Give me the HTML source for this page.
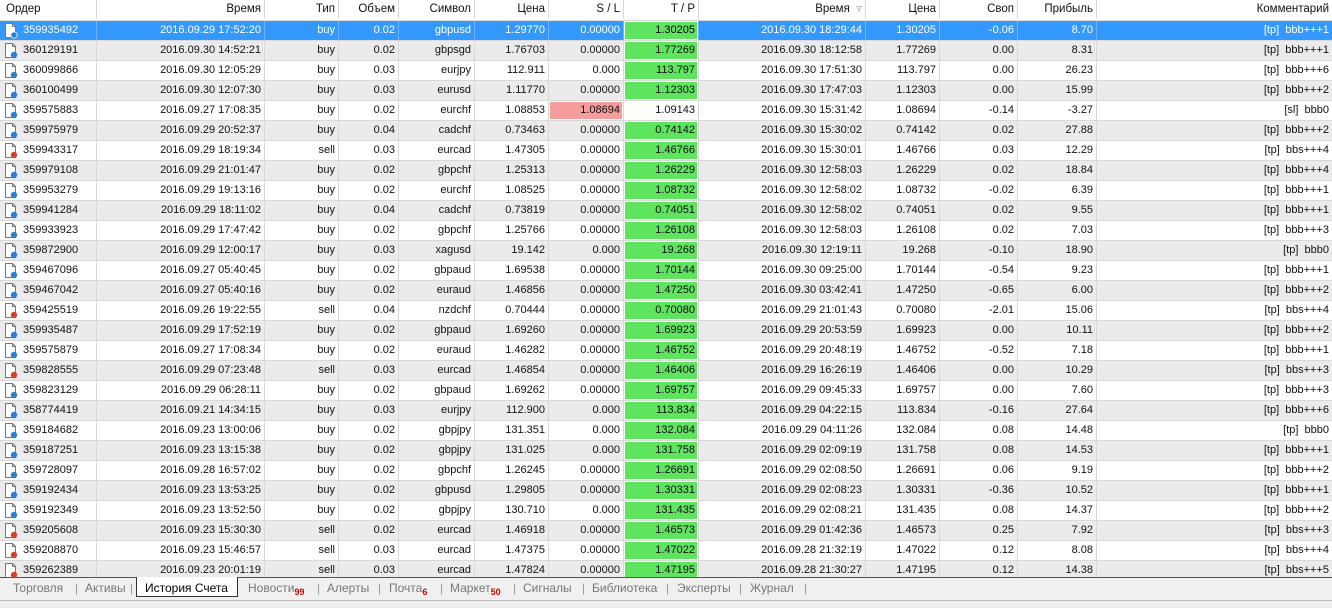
<!DOCTYPE html>
<html><head><meta charset="utf-8"><style>
*{margin:0;padding:0;box-sizing:border-box}
body{width:1332px;height:608px;overflow:hidden;background:#fff;font-family:"Liberation Sans",sans-serif;font-size:11px;color:#111;position:relative}
.r{position:absolute;left:0;width:1332px;height:20px;display:flex;border-bottom:1px solid #d9d9d9}
.r>div{height:19px;line-height:19px;text-align:right;padding-right:3px;border-right:1px solid #d9d9d9;white-space:nowrap;overflow:hidden;position:relative}
.r>div:nth-child(1){width:97px;text-align:left;padding-left:23px}
.r>div:nth-child(2){width:168px}.r>div:nth-child(3){width:74px}.r>div:nth-child(4){width:60px}
.r>div:nth-child(5){width:76px}.r>div:nth-child(6){width:74px}.r>div:nth-child(7){width:75px}
.r>div:nth-child(8){width:75px}.r>div:nth-child(9){width:167px}.r>div:nth-child(10){width:74px}
.r>div:nth-child(11){width:78px}.r>div:nth-child(12){width:79px}.r>div:nth-child(13){width:235px;border-right:none}
.h{top:0;background:#fff;height:21px;font-size:11.5px}
.h>div:nth-child(1){padding-left:6px}
.g{background:#ebebeb}
.s{background:#3399ff;color:#fff}
.s>div{border-right-color:#6fb3ff}
.t{background:#5fe45f;box-shadow:inset 0 0 0 1px #fff}
.s .t{color:#000}
.l{background:#f59d9d;box-shadow:inset 0 0 0 1px #fff}
.i{position:absolute;left:4px;top:2px}
.tabs{position:absolute;left:0;top:577px;width:1332px;height:24px;background:#f0f0f0;border-top:1px solid #555;border-bottom:1px solid #bbb;color:#777;font-size:12px}
.tabs span{position:absolute;top:3px}
.tabs .sep{color:#999}
.tabs sub{color:#d00;font-size:9px;font-weight:bold;vertical-align:-3px}
.act{position:absolute;left:136px;top:-1px;width:102px;height:20px;background:#fff;border:1px solid #333;border-top:none}
.bot{position:absolute;left:0;top:601px;width:1332px;height:7px;background:#f0f0f0}
</style></head><body>
<svg width="0" height="0" style="position:absolute"><defs>
<g id="doc"><path d="M1.5 .5h7l3 3v11h-10z" fill="#fff" stroke="#777"/><path d="M8.5 .5v3h3" fill="none" stroke="#777"/></g>
</defs></svg>
<div class="r h"><div>Ордер</div><div>Время</div><div>Тип</div><div>Объем</div><div>Символ</div><div>Цена</div><div>S / L</div><div>T / P</div><div>Время &nbsp;<span style="color:#999">▿</span></div><div>Цена</div><div>Своп</div><div>Прибыль</div><div>Комментарий</div></div>

<div class="r s" style="top:21px"><div><svg class="i" width="14" height="16"><use href="#doc"/><circle cx="10" cy="12" r="3.2" fill="#2a7fd4" stroke="#fff" stroke-width=".8"/></svg>359935492</div><div>2016.09.29 17:52:20</div><div>buy</div><div>0.02</div><div>gbpusd</div><div>1.29770</div><div>0.00000</div><div class="t">1.30205</div><div>2016.09.30 18:29:44</div><div>1.30205</div><div>-0.06</div><div>8.70</div><div>[tp]&nbsp; bbb+++1</div></div>
<div class="r g" style="top:41px"><div><svg class="i" width="14" height="16"><use href="#doc"/><circle cx="10" cy="12" r="3.2" fill="#2a7fd4"/></svg>360129191</div><div>2016.09.30 14:52:21</div><div>buy</div><div>0.02</div><div>gbpsgd</div><div>1.76703</div><div>0.00000</div><div class="t">1.77269</div><div>2016.09.30 18:12:58</div><div>1.77269</div><div>0.00</div><div>8.31</div><div>[tp]&nbsp; bbb+++1</div></div>
<div class="r" style="top:61px"><div><svg class="i" width="14" height="16"><use href="#doc"/><circle cx="10" cy="12" r="3.2" fill="#2a7fd4"/></svg>360099866</div><div>2016.09.30 12:05:29</div><div>buy</div><div>0.03</div><div>eurjpy</div><div>112.911</div><div>0.000</div><div class="t">113.797</div><div>2016.09.30 17:51:30</div><div>113.797</div><div>0.00</div><div>26.23</div><div>[tp]&nbsp; bbb+++6</div></div>
<div class="r g" style="top:81px"><div><svg class="i" width="14" height="16"><use href="#doc"/><circle cx="10" cy="12" r="3.2" fill="#2a7fd4"/></svg>360100499</div><div>2016.09.30 12:07:30</div><div>buy</div><div>0.03</div><div>eurusd</div><div>1.11770</div><div>0.00000</div><div class="t">1.12303</div><div>2016.09.30 17:47:03</div><div>1.12303</div><div>0.00</div><div>15.99</div><div>[tp]&nbsp; bbb+++2</div></div>
<div class="r" style="top:101px"><div><svg class="i" width="14" height="16"><use href="#doc"/><circle cx="10" cy="12" r="3.2" fill="#2a7fd4"/></svg>359575883</div><div>2016.09.27 17:08:35</div><div>buy</div><div>0.02</div><div>eurchf</div><div>1.08853</div><div class="l">1.08694</div><div>1.09143</div><div>2016.09.30 15:31:42</div><div>1.08694</div><div>-0.14</div><div>-3.27</div><div>[sl]&nbsp; bbb0</div></div>
<div class="r g" style="top:121px"><div><svg class="i" width="14" height="16"><use href="#doc"/><circle cx="10" cy="12" r="3.2" fill="#2a7fd4"/></svg>359975979</div><div>2016.09.29 20:52:37</div><div>buy</div><div>0.04</div><div>cadchf</div><div>0.73463</div><div>0.00000</div><div class="t">0.74142</div><div>2016.09.30 15:30:02</div><div>0.74142</div><div>0.02</div><div>27.88</div><div>[tp]&nbsp; bbb+++2</div></div>
<div class="r" style="top:141px"><div><svg class="i" width="14" height="16"><use href="#doc"/><circle cx="10" cy="12" r="3.2" fill="#d9412a"/></svg>359943317</div><div>2016.09.29 18:19:34</div><div>sell</div><div>0.03</div><div>eurcad</div><div>1.47305</div><div>0.00000</div><div class="t">1.46766</div><div>2016.09.30 15:30:01</div><div>1.46766</div><div>0.03</div><div>12.29</div><div>[tp]&nbsp; bbs+++4</div></div>
<div class="r g" style="top:161px"><div><svg class="i" width="14" height="16"><use href="#doc"/><circle cx="10" cy="12" r="3.2" fill="#2a7fd4"/></svg>359979108</div><div>2016.09.29 21:01:47</div><div>buy</div><div>0.02</div><div>gbpchf</div><div>1.25313</div><div>0.00000</div><div class="t">1.26229</div><div>2016.09.30 12:58:03</div><div>1.26229</div><div>0.02</div><div>18.84</div><div>[tp]&nbsp; bbb+++4</div></div>
<div class="r" style="top:181px"><div><svg class="i" width="14" height="16"><use href="#doc"/><circle cx="10" cy="12" r="3.2" fill="#2a7fd4"/></svg>359953279</div><div>2016.09.29 19:13:16</div><div>buy</div><div>0.02</div><div>eurchf</div><div>1.08525</div><div>0.00000</div><div class="t">1.08732</div><div>2016.09.30 12:58:02</div><div>1.08732</div><div>-0.02</div><div>6.39</div><div>[tp]&nbsp; bbb+++1</div></div>
<div class="r g" style="top:201px"><div><svg class="i" width="14" height="16"><use href="#doc"/><circle cx="10" cy="12" r="3.2" fill="#2a7fd4"/></svg>359941284</div><div>2016.09.29 18:11:02</div><div>buy</div><div>0.04</div><div>cadchf</div><div>0.73819</div><div>0.00000</div><div class="t">0.74051</div><div>2016.09.30 12:58:02</div><div>0.74051</div><div>0.02</div><div>9.55</div><div>[tp]&nbsp; bbb+++1</div></div>
<div class="r" style="top:221px"><div><svg class="i" width="14" height="16"><use href="#doc"/><circle cx="10" cy="12" r="3.2" fill="#2a7fd4"/></svg>359933923</div><div>2016.09.29 17:47:42</div><div>buy</div><div>0.02</div><div>gbpchf</div><div>1.25766</div><div>0.00000</div><div class="t">1.26108</div><div>2016.09.30 12:58:03</div><div>1.26108</div><div>0.02</div><div>7.03</div><div>[tp]&nbsp; bbb+++3</div></div>
<div class="r g" style="top:241px"><div><svg class="i" width="14" height="16"><use href="#doc"/><circle cx="10" cy="12" r="3.2" fill="#2a7fd4"/></svg>359872900</div><div>2016.09.29 12:00:17</div><div>buy</div><div>0.03</div><div>xagusd</div><div>19.142</div><div>0.000</div><div class="t">19.268</div><div>2016.09.30 12:19:11</div><div>19.268</div><div>-0.10</div><div>18.90</div><div>[tp]&nbsp; bbb0</div></div>
<div class="r" style="top:261px"><div><svg class="i" width="14" height="16"><use href="#doc"/><circle cx="10" cy="12" r="3.2" fill="#2a7fd4"/></svg>359467096</div><div>2016.09.27 05:40:45</div><div>buy</div><div>0.02</div><div>gbpaud</div><div>1.69538</div><div>0.00000</div><div class="t">1.70144</div><div>2016.09.30 09:25:00</div><div>1.70144</div><div>-0.54</div><div>9.23</div><div>[tp]&nbsp; bbb+++1</div></div>
<div class="r g" style="top:281px"><div><svg class="i" width="14" height="16"><use href="#doc"/><circle cx="10" cy="12" r="3.2" fill="#2a7fd4"/></svg>359467042</div><div>2016.09.27 05:40:16</div><div>buy</div><div>0.02</div><div>euraud</div><div>1.46856</div><div>0.00000</div><div class="t">1.47250</div><div>2016.09.30 03:42:41</div><div>1.47250</div><div>-0.65</div><div>6.00</div><div>[tp]&nbsp; bbb+++2</div></div>
<div class="r" style="top:301px"><div><svg class="i" width="14" height="16"><use href="#doc"/><circle cx="10" cy="12" r="3.2" fill="#d9412a"/></svg>359425519</div><div>2016.09.26 19:22:55</div><div>sell</div><div>0.04</div><div>nzdchf</div><div>0.70444</div><div>0.00000</div><div class="t">0.70080</div><div>2016.09.29 21:01:43</div><div>0.70080</div><div>-2.01</div><div>15.06</div><div>[tp]&nbsp; bbs+++4</div></div>
<div class="r g" style="top:321px"><div><svg class="i" width="14" height="16"><use href="#doc"/><circle cx="10" cy="12" r="3.2" fill="#2a7fd4"/></svg>359935487</div><div>2016.09.29 17:52:19</div><div>buy</div><div>0.02</div><div>gbpaud</div><div>1.69260</div><div>0.00000</div><div class="t">1.69923</div><div>2016.09.29 20:53:59</div><div>1.69923</div><div>0.00</div><div>10.11</div><div>[tp]&nbsp; bbb+++2</div></div>
<div class="r" style="top:341px"><div><svg class="i" width="14" height="16"><use href="#doc"/><circle cx="10" cy="12" r="3.2" fill="#2a7fd4"/></svg>359575879</div><div>2016.09.27 17:08:34</div><div>buy</div><div>0.02</div><div>euraud</div><div>1.46282</div><div>0.00000</div><div class="t">1.46752</div><div>2016.09.29 20:48:19</div><div>1.46752</div><div>-0.52</div><div>7.18</div><div>[tp]&nbsp; bbb+++1</div></div>
<div class="r g" style="top:361px"><div><svg class="i" width="14" height="16"><use href="#doc"/><circle cx="10" cy="12" r="3.2" fill="#d9412a"/></svg>359828555</div><div>2016.09.29 07:23:48</div><div>sell</div><div>0.03</div><div>eurcad</div><div>1.46854</div><div>0.00000</div><div class="t">1.46406</div><div>2016.09.29 16:26:19</div><div>1.46406</div><div>0.00</div><div>10.29</div><div>[tp]&nbsp; bbs+++3</div></div>
<div class="r" style="top:381px"><div><svg class="i" width="14" height="16"><use href="#doc"/><circle cx="10" cy="12" r="3.2" fill="#2a7fd4"/></svg>359823129</div><div>2016.09.29 06:28:11</div><div>buy</div><div>0.02</div><div>gbpaud</div><div>1.69262</div><div>0.00000</div><div class="t">1.69757</div><div>2016.09.29 09:45:33</div><div>1.69757</div><div>0.00</div><div>7.60</div><div>[tp]&nbsp; bbb+++3</div></div>
<div class="r g" style="top:401px"><div><svg class="i" width="14" height="16"><use href="#doc"/><circle cx="10" cy="12" r="3.2" fill="#2a7fd4"/></svg>358774419</div><div>2016.09.21 14:34:15</div><div>buy</div><div>0.03</div><div>eurjpy</div><div>112.900</div><div>0.000</div><div class="t">113.834</div><div>2016.09.29 04:22:15</div><div>113.834</div><div>-0.16</div><div>27.64</div><div>[tp]&nbsp; bbb+++6</div></div>
<div class="r" style="top:421px"><div><svg class="i" width="14" height="16"><use href="#doc"/><circle cx="10" cy="12" r="3.2" fill="#2a7fd4"/></svg>359184682</div><div>2016.09.23 13:00:06</div><div>buy</div><div>0.02</div><div>gbpjpy</div><div>131.351</div><div>0.000</div><div class="t">132.084</div><div>2016.09.29 04:11:26</div><div>132.084</div><div>0.08</div><div>14.48</div><div>[tp]&nbsp; bbb0</div></div>
<div class="r g" style="top:441px"><div><svg class="i" width="14" height="16"><use href="#doc"/><circle cx="10" cy="12" r="3.2" fill="#2a7fd4"/></svg>359187251</div><div>2016.09.23 13:15:38</div><div>buy</div><div>0.02</div><div>gbpjpy</div><div>131.025</div><div>0.000</div><div class="t">131.758</div><div>2016.09.29 02:09:19</div><div>131.758</div><div>0.08</div><div>14.53</div><div>[tp]&nbsp; bbb+++1</div></div>
<div class="r" style="top:461px"><div><svg class="i" width="14" height="16"><use href="#doc"/><circle cx="10" cy="12" r="3.2" fill="#2a7fd4"/></svg>359728097</div><div>2016.09.28 16:57:02</div><div>buy</div><div>0.02</div><div>gbpchf</div><div>1.26245</div><div>0.00000</div><div class="t">1.26691</div><div>2016.09.29 02:08:50</div><div>1.26691</div><div>0.06</div><div>9.19</div><div>[tp]&nbsp; bbb+++2</div></div>
<div class="r g" style="top:481px"><div><svg class="i" width="14" height="16"><use href="#doc"/><circle cx="10" cy="12" r="3.2" fill="#2a7fd4"/></svg>359192434</div><div>2016.09.23 13:53:25</div><div>buy</div><div>0.02</div><div>gbpusd</div><div>1.29805</div><div>0.00000</div><div class="t">1.30331</div><div>2016.09.29 02:08:23</div><div>1.30331</div><div>-0.36</div><div>10.52</div><div>[tp]&nbsp; bbb+++1</div></div>
<div class="r" style="top:501px"><div><svg class="i" width="14" height="16"><use href="#doc"/><circle cx="10" cy="12" r="3.2" fill="#2a7fd4"/></svg>359192349</div><div>2016.09.23 13:52:50</div><div>buy</div><div>0.02</div><div>gbpjpy</div><div>130.710</div><div>0.000</div><div class="t">131.435</div><div>2016.09.29 02:08:21</div><div>131.435</div><div>0.08</div><div>14.37</div><div>[tp]&nbsp; bbb+++2</div></div>
<div class="r g" style="top:521px"><div><svg class="i" width="14" height="16"><use href="#doc"/><circle cx="10" cy="12" r="3.2" fill="#d9412a"/></svg>359205608</div><div>2016.09.23 15:30:30</div><div>sell</div><div>0.02</div><div>eurcad</div><div>1.46918</div><div>0.00000</div><div class="t">1.46573</div><div>2016.09.29 01:42:36</div><div>1.46573</div><div>0.25</div><div>7.92</div><div>[tp]&nbsp; bbs+++3</div></div>
<div class="r" style="top:541px"><div><svg class="i" width="14" height="16"><use href="#doc"/><circle cx="10" cy="12" r="3.2" fill="#d9412a"/></svg>359208870</div><div>2016.09.23 15:46:57</div><div>sell</div><div>0.03</div><div>eurcad</div><div>1.47375</div><div>0.00000</div><div class="t">1.47022</div><div>2016.09.28 21:32:19</div><div>1.47022</div><div>0.12</div><div>8.08</div><div>[tp]&nbsp; bbs+++4</div></div>
<div class="r g" style="top:561px"><div><svg class="i" width="14" height="16"><use href="#doc"/><circle cx="10" cy="12" r="3.2" fill="#d9412a"/></svg>359262389</div><div>2016.09.23 20:01:19</div><div>sell</div><div>0.03</div><div>eurcad</div><div>1.47824</div><div>0.00000</div><div class="t">1.47195</div><div>2016.09.28 21:30:27</div><div>1.47195</div><div>0.12</div><div>14.38</div><div>[tp]&nbsp; bbs+++5</div></div>

<div class="tabs">
<div class="act"></div>
<span style="left:13px">Торговля</span><span class="sep" style="left:75px">|</span>
<span style="left:85px">Активы</span><span class="sep" style="left:130px">|</span>
<span style="left:145px;color:#000">История Счета</span>
<span style="left:248px">Новости<sub>99</sub></span><span class="sep" style="left:317px">|</span>
<span style="left:327px">Алерты</span><span class="sep" style="left:378px">|</span>
<span style="left:389px">Почта<sub>6</sub></span><span class="sep" style="left:440px">|</span>
<span style="left:450px">Маркет<sub>50</sub></span><span class="sep" style="left:513px">|</span>
<span style="left:523px">Сигналы</span><span class="sep" style="left:582px">|</span>
<span style="left:592px">Библиотека</span><span class="sep" style="left:666px">|</span>
<span style="left:677px">Эксперты</span><span class="sep" style="left:739px">|</span>
<span style="left:750px">Журнал</span><span class="sep" style="left:804px">|</span>
</div>
<div class="bot"></div>
</body></html>
